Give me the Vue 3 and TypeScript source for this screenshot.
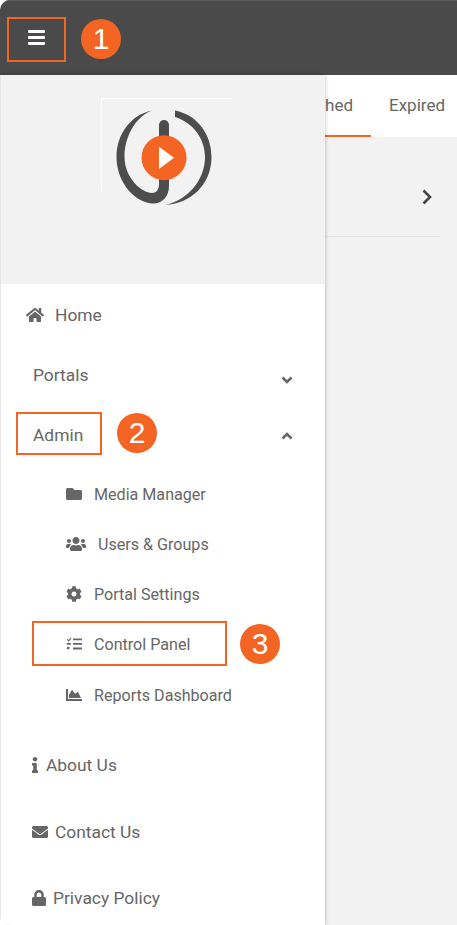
<script setup lang="ts">
interface Item { label: string; view: string; d: string; w: number; h: number; gap: number }
const p = {
  folder: 'M464 128H272l-64-64H48C21.49 64 0 85.49 0 112v288c0 26.51 21.49 48 48 48h416c26.51 0 48-21.49 48-48V176c0-26.51-21.49-48-48-48z',
  users: 'M96 224c35.3 0 64-28.7 64-64s-28.7-64-64-64-64 28.7-64 64 28.7 64 64 64zm448 0c35.3 0 64-28.7 64-64s-28.7-64-64-64-64 28.7-64 64 28.7 64 64 64zm32 32h-64c-17.6 0-33.5 7.1-45.1 18.6 40.3 22.1 68.9 62 75.1 109.4h66c17.7 0 32-14.3 32-32v-32c0-35.3-28.7-64-64-64zm-256 0c61.9 0 112-50.1 112-112S381.9 32 320 32 208 82.1 208 144s50.1 112 112 112zm76.8 32h-8.3c-20.8 10-43.9 16-68.5 16s-47.6-6-68.5-16h-8.3C179.6 288 128 339.6 128 403.2V432c0 26.5 21.5 48 48 48h288c26.5 0 48-21.5 48-48v-28.8c0-63.6-51.6-115.2-115.2-115.2zm-223.7-13.4C161.5 263.1 145.6 256 128 256H64c-35.3 0-64 28.7-64 64v32c0 17.7 14.3 32 32 32h65.9c6.3-47.4 34.9-87.3 75.2-109.4z',
  cog: 'M487.4 315.7l-42.6-24.6c4.3-23.2 4.3-47 0-70.2l42.6-24.6c4.9-2.8 7.1-8.6 5.5-14-11.1-35.6-30-67.8-54.7-94.6-3.8-4.1-10-5.1-14.8-2.3L380.8 110c-17.9-15.4-38.5-27.3-60.8-35.1V25.8c0-5.6-3.9-10.5-9.4-11.7-36.7-8.2-74.3-7.8-109.2 0-5.5 1.2-9.4 6.1-9.4 11.7V75c-22.2 7.9-42.8 19.8-60.8 35.1L88.7 85.5c-4.9-2.8-11-1.9-14.8 2.3-24.7 26.7-43.6 58.9-54.7 94.6-1.7 5.4.6 11.2 5.5 14L67.3 221c-4.3 23.2-4.3 47 0 70.2l-42.6 24.6c-4.9 2.8-7.1 8.6-5.5 14 11.1 35.6 30 67.8 54.7 94.6 3.8 4.1 10 5.1 14.8 2.3l42.6-24.6c17.9 15.4 38.5 27.3 60.8 35.1v49.2c0 5.6 3.9 10.5 9.4 11.7 36.7 8.2 74.3 7.8 109.2 0 5.5-1.2 9.4-6.1 9.4-11.7v-49.2c22.2-7.9 42.8-19.8 60.8-35.1l42.6 24.6c4.9 2.8 11 1.9 14.8-2.3 24.7-26.7 43.6-58.9 54.7-94.6 1.5-5.5-.7-11.3-5.6-14.1zM256 336c-44.1 0-80-35.9-80-80s35.9-80 80-80 80 35.9 80 80-35.9 80-80 80z',
  tasks: 'M50 95l32 30 62-72 30 26-88 104-62-60zM226 76h286v60H226zM226 222h286v60H226zM226 368h286v60H226zM50 222h76c20 0 32 14 32 30s-12 30-32 30H50c-18 0-30-14-30-30s12-30 30-30zM70 340a46 46 0 1 1 0 92 46 46 0 0 1 0-92z',
  chart: 'M500 384c6.6 0 12 5.4 12 12v40c0 6.6-5.4 12-12 12H12c-6.6 0-12-5.4-12-12V76c0-6.6 5.4-12 12-12h40c6.6 0 12 5.4 12 12v308h436zM372.7 159.5L288 216l-85.3-113.7c-5.1-6.8-15.5-6.3-19.9 1L96 248v104h384l-89.9-187.8c-3.2-6.5-11.4-8.7-17.4-4.7z',
  info: 'M20 424.229h20V279.771H20c-11.046 0-20-8.954-20-20V212c0-11.046 8.954-20 20-20h112c11.046 0 20 8.954 20 20v212.229h20c11.046 0 20 8.954 20 20V492c0 11.046-8.954 20-20 20H20c-11.046 0-20-8.954-20-20v-47.771c0-11.046 8.954-20 20-20zM96 0C56.235 0 24 32.235 24 72s32.235 72 72 72 72-32.235 72-72S135.764 0 96 0z',
  mail: 'M502.3 190.8c3.9-3.1 9.7-.2 9.7 4.7V400c0 26.5-21.5 48-48 48H48c-26.5 0-48-21.5-48-48V195.6c0-5 5.7-7.8 9.7-4.7 22.4 17.4 52.1 39.5 154.1 113.6 21.1 15.4 56.7 47.8 92.2 47.6 35.7.3 72-32.8 92.3-47.6 102-74.1 131.6-96.3 154-113.7zM256 320c23.2.4 56.6-29.2 73.4-41.4 132.7-96.3 142.8-104.7 173.4-128.7 5.8-4.5 9.2-11.5 9.2-18.9v-19c0-26.5-21.5-48-48-48H48C21.5 64 0 85.5 0 112v19c0 7.4 3.4 14.3 9.2 18.9 30.6 23.9 40.7 32.4 173.4 128.7 16.8 12.2 50.2 41.8 73.4 41.4z',
  lock: 'M400 224h-24v-72C376 68.2 307.8 0 224 0S72 68.2 72 152v72H48c-26.5 0-48 21.5-48 48v192c0 26.5 21.5 48 48 48h352c26.5 0 48-21.5 48-48V272c0-26.5-21.5-48-48-48zm-104 0H152v-72c0-39.7 32.3-72 72-72s72 32.3 72 72v72z',
}
const homePath = 'M280.37 148.26L96 300.11V464a16 16 0 0 0 16 16l112.06-.29a16 16 0 0 0 15.92-16V368a16 16 0 0 1 16-16h64a16 16 0 0 1 16 16v95.64a16 16 0 0 0 16 16.05L464 480a16 16 0 0 0 16-16V300L295.67 148.26a12.19 12.19 0 0 0-15.3 0zM571.6 251.47L488 182.56V44.05a12 12 0 0 0-12-12h-56a12 12 0 0 0-12 12v72.61L318.47 43a48 48 0 0 0-61 0L4.34 251.47a12 12 0 0 0-1.6 16.9l25.5 31A12 12 0 0 0 45.15 301l235.22-193.74a12.19 12.19 0 0 1 15.3 0L530.9 301a12 12 0 0 0 16.9-1.6l25.5-31a12 12 0 0 0-1.7-16.93z'
const subItems: Item[] = [
  { label: 'Media Manager', view: '0 0 512 512', d: p.folder, w: 16, h: 16, gap: 12 },
  { label: 'Users & Groups', view: '0 0 640 512', d: p.users, w: 20, h: 16, gap: 12 },
  { label: 'Portal Settings', view: '0 0 512 512', d: p.cog, w: 16, h: 16, gap: 12 },
  { label: 'Control Panel', view: '0 0 512 512', d: p.tasks, w: 16, h: 16, gap: 12 },
  { label: 'Reports Dashboard', view: '0 0 512 512', d: p.chart, w: 16, h: 16, gap: 12 },
]
const footItems: (Item & { cls: string })[] = [
  { label: 'About Us', view: '0 0 192 512', d: p.info, w: 6, h: 16, gap: 8, cls: 'about' },
  { label: 'Contact Us', view: '0 0 512 512', d: p.mail, w: 16, h: 16, gap: 7, cls: 'contact' },
  { label: 'Privacy Policy', view: '0 0 448 512', d: p.lock, w: 14, h: 16, gap: 7, cls: 'privacy' },
]
</script>

<template>
  <div class="app">
    <header class="topbar">
      <button class="menu-btn" aria-label="Menu"><span></span><span></span><span></span></button>
      <span class="badge">1</span>
    </header>

    <main class="content">
      <nav class="tabs">
        <span class="tab active">Published</span>
        <span class="tab">Expired</span>
      </nav>
      <div class="list-row">
        <span class="row-title">Course</span>
        <svg class="chev-right" viewBox="0 0 12 16" width="12" height="16"><path d="M2.5 1.500 9 8l-6.500 6.500" fill="none" stroke="#444" stroke-width="2.6" /></svg>
      </div>
    </main>

    <aside class="drawer">
      <div class="logo-wrap">
        <div class="logo-frame">
          <svg class="logo" viewBox="0 0 110 110" width="110" height="110">
            <path fill="#4d4d4d" d="M42 10.500C20 15 6.500 35 6.500 57 6.500 84 27 103.500 43 103.500 53 103.500 59 96 59 86V70H49V84C49 90 46 93 42 93 32 93 14.500 78 14.500 57 14.500 37 25 17 42 10.500Z" />
            <rect x="49" y="20" width="10" height="34" rx="5" fill="#4d4d4d" />
            <path fill="#4d4d4d" d="M65 10.500C88 15 101.500 35 101.500 57 101.500 85 80 104 55 105 78 100 95 80 95 57 95 38 82 22 65 17Z" />
            <circle cx="54" cy="57.700" r="22.500" fill="#f46524" />
            <path fill="#fff" d="M49 46.700 64 57.700 49 69Z" />
          </svg>
        </div>
      </div>

      <ul class="menu">
        <li class="item home">
          <svg viewBox="0 0 576 512" width="18" height="16"><path :d="homePath" /></svg>
          <span>Home</span>
        </li>
        <li class="item group">
          <span>Portals</span>
          <svg class="caret down" viewBox="0 0 12 8" width="12" height="8"><path d="M1.5 1.500 6 6l4.500-4.500" /></svg>
        </li>
        <li class="item group">
          <span>Admin</span>
          <svg class="caret up" viewBox="0 0 12 8" width="12" height="8"><path d="M1.500 6.500 6 2l4.500 4.500" /></svg>
          <i class="outline admin-box"></i>
          <span class="badge admin-badge">2</span>
        </li>
        <li v-for="(it, i) in subItems" :key="it.label" class="item sub">
          <svg :viewBox="it.view" :width="it.w" :height="it.h"><path :d="it.d" /></svg>
          <span :style="{ marginLeft: it.gap + 'px' }">{{ it.label }}</span>
          <template v-if="i === 3">
            <i class="outline control-box"></i>
            <span class="badge control-badge">3</span>
          </template>
        </li>
        <li v-for="it in footItems" :key="it.label" class="item foot" :class="it.cls">
          <svg :viewBox="it.view" :width="it.w" :height="it.h"><path :d="it.d" /></svg>
          <span :style="{ marginLeft: it.gap + 'px' }">{{ it.label }}</span>
        </li>
      </ul>
    </aside>
  </div>
</template>

<style>
html, body { margin: 0; background: #fff; }
</style>

<style scoped>
.app {
  position: relative;
  width: 457px;
  height: 925px;
  overflow: hidden;
  background: #f2f2f2;
  border-radius: 10px 0 0 10px;
  font-family: Roboto, sans-serif;
  color: #666;
}
.topbar {
  height: 75px;
  box-sizing: border-box;
  display: flex;
  align-items: center;
  background: #4a4a4a;
  border-top: 1px solid #5a5a5a;
  padding: 0 0 0 7px;
}
.menu-btn {
  width: 59px;
  height: 45px;
  margin-top: 3px;
  box-sizing: border-box;
  border: 2px solid #f46524;
  background: none;
  padding: 0 0 5px;
  display: flex;
  flex-direction: column;
  align-items: center;
  justify-content: center;
  gap: 3px;
}
.menu-btn span {
  width: 17px;
  height: 3px;
  background: #fff;
  border-radius: 1px;
}
.badge {
  display: flex;
  align-items: center;
  justify-content: center;
  width: 40px;
  height: 40px;
  border-radius: 50%;
  background: #f46524;
  color: #fff;
  font-family: "Liberation Sans", Arial, sans-serif;
  font-size: 30px;
}
.topbar .badge { margin: 2px 0 0 15px; }
.content { display: flex; flex-direction: column; }
.tabs {
  height: 62px;
  box-sizing: border-box;
  display: flex;
  background: #fff;
  padding-left: 265px;
  overflow: hidden;
  font-size: 17px;
}
.tab {
  padding: 0 18px;
  line-height: 60px;
  white-space: nowrap;
  flex: none;
}
.tab.active {
  box-sizing: border-box;
  width: 106px;
  display: flex;
  justify-content: flex-end;
  border-bottom: 2px solid #f46524;
}
.list-row {
  height: 100px;
  margin-right: 17px;
  box-sizing: border-box;
  display: flex;
  align-items: center;
  justify-content: space-between;
  border-bottom: 1px solid #e6e6e6;
  padding: 21px 7px 0 20px;
}
.chev-right { margin-top: -1px; }
.drawer {
  position: absolute;
  left: 0;
  top: 75px;
  width: 325px;
  height: 850px;
  background: #fff;
  box-shadow: 0 0 4px rgba(0, 0, 0, 0.28), inset 1px 0 0 #e3e6ea;
  overflow: hidden;
}
.logo-wrap {
  height: 209px;
  background: #f2f2f2;
  box-shadow: inset 1px 0 0 #e3e6ea;
  padding: 23px 0 0 101px;
  box-sizing: border-box;
}
.logo-frame {
  width: 131px;
  height: 93px;
  border-top: 1px solid #fff;
  border-left: 1px solid #fff;
  box-sizing: border-box;
  position: relative;
}
.logo {
  position: absolute;
  left: 8px;
  top: 1px;
}
.menu {
  list-style: none;
  margin: 0;
  padding: 0;
  font-size: 17.4px;
}
.item {
  position: relative;
  display: flex;
  align-items: center;
  white-space: nowrap;
}
.item svg { fill: #666; flex: none; }
.home { height: 61px; padding-left: 26px; }
.home span { margin-left: 11px; }
.group { height: 60px; padding-left: 33px; }
.group:nth-child(3) { margin-bottom: 4px; }
.caret {
  position: absolute;
  left: 281px;
  fill: none !important;
  stroke: #666;
  stroke-width: 2.6;
}
.caret.down { top: 31px; }
.caret.up { top: 27px; }
.sub { height: 50px; padding-left: 66px; font-size: 16.1px; }
.sub:nth-child(8) { margin-top: 1px; }
.foot { padding-left: 32px; }
.about { height: 70px; margin-top: 10px; }
.contact { height: 64px; }
.privacy { height: 68px; }
.outline {
  position: absolute;
  box-sizing: border-box;
  border: 2px solid #f46524;
}
.admin-box { left: 16px; top: 7px; width: 86px; height: 43px; }
.admin-badge { position: absolute; left: 117px; top: 8px; }
.control-box { left: 32px; top: 2px; width: 195px; height: 45px; }
.control-badge { position: absolute; left: 240px; top: 5px; }
</style>
